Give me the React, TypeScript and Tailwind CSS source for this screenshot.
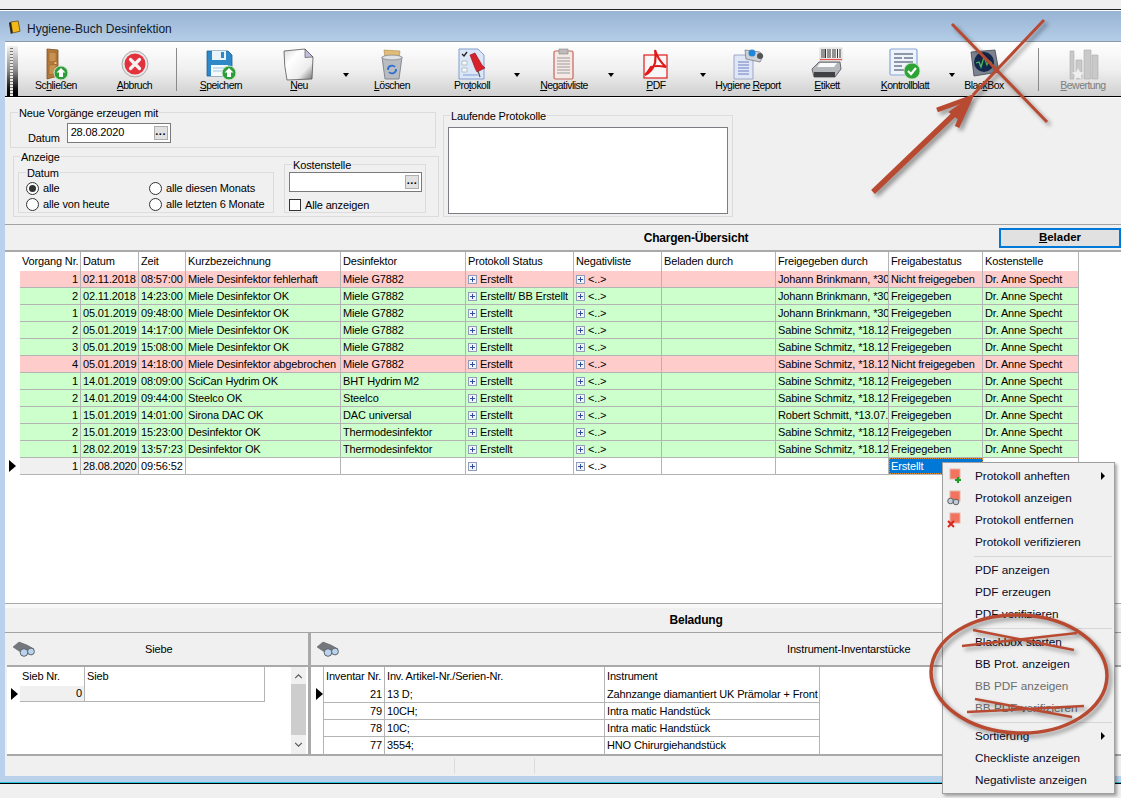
import type { ReactNode } from 'react'

const SANS = 'font-["Liberation_Sans",Arial,sans-serif]'

function UpBadge({ x, y }: { x: number; y: number }) {
  return (
    <g>
      <circle cx={x} cy={y} r="7" fill="#2f9e3a" stroke="#cfe8d0" strokeWidth="1" />
      <path d={`M${x} ${y - 5}l4.5 4.5h-2.5v4.5h-4v-4.5h-2.5z`} fill="#fff" />
    </g>
  )
}

function DoorIcon() {
  return (
    <svg viewBox="0 0 36 34" className="h-[34px] w-9">
      <path d="M9 2l11 1v26l-11 3z" fill="#b27a3c" stroke="#7b4d20" strokeWidth=".8" />
      <path d="M11 5l7 .5v9l-7 .5zM11 18l7-.5v9l-7 1.500z" fill="#c8914f" stroke="#8d5c2a" strokeWidth=".5" />
      <circle cx="17.500" cy="16" r="1" fill="#f4d77b" />
      <UpBadge x={23} y={26} />
    </svg>
  )
}

function CancelIcon() {
  return (
    <svg viewBox="0 0 36 34" className="h-[34px] w-9">
      <circle cx="18" cy="17" r="13" fill="#e8e8e8" stroke="#a9a9a9" strokeWidth="1" />
      <circle cx="18" cy="17" r="10.500" fill="#e2333d" />
      <path d="M13.500 12.500l9 9M22.500 12.500l-9 9" stroke="#f7f3f3" strokeWidth="3.200" strokeLinecap="round" />
    </svg>
  )
}

function FloppyIcon() {
  return (
    <svg viewBox="0 0 36 34" className="h-[34px] w-9">
      <path d="M4 4h21l4 4v21H4z" fill="#2f88c8" stroke="#1f6192" strokeWidth=".8" />
      <rect x="9" y="4" width="14" height="9" fill="#e9f3fa" />
      <rect x="18" y="5" width="3" height="6" fill="#2f88c8" />
      <rect x="8" y="18" width="17" height="11" fill="#f5fafd" />
      <path d="M10 21h12M10 24h12" stroke="#9fc5de" strokeWidth="1" />
      <UpBadge x={26} y={26} />
    </svg>
  )
}

function PageIcon() {
  return (
    <svg viewBox="0 0 36 34" className="h-[34px] w-9">
      <defs>
        <linearGradient id="pg" x1="0" y1="0" x2="1" y2="1">
          <stop offset="0" stopColor="#d9d9d9" />
          <stop offset=".3" stopColor="#ffffff" />
          <stop offset=".7" stopColor="#ededed" />
          <stop offset="1" stopColor="#6f6f6f" />
        </linearGradient>
      </defs>
      <path d="M3 4l21-2 8 8-1 22-25 1q-3-14-3-29z" fill="url(#pg)" stroke="#555" strokeWidth=".8" />
      <path d="M24 2l8 8-8 .5z" fill="#c3bde0" stroke="#444" strokeWidth=".6" />
    </svg>
  )
}

function TrashIcon() {
  return (
    <svg viewBox="0 0 36 34" className="h-[34px] w-9">
      <path d="M10 3l16 1-1 8H11z" fill="#e1bc79" stroke="#a9884f" strokeWidth=".6" />
      <path d="M8 10h20l-3 22H11z" fill="#b9bdc2" stroke="#70757b" strokeWidth=".8" />
      <ellipse cx="18" cy="10.500" rx="10" ry="2.400" fill="#dfe2e5" stroke="#7c8187" strokeWidth=".7" />
      <path d="M14 23a4 4 0 0 1 7-3M22 22a4 4 0 0 1-7 3" fill="none" stroke="#2e6fd1" strokeWidth="1.800" />
    </svg>
  )
}

function ProtocolIcon() {
  return (
    <svg viewBox="0 0 36 34" className="h-[34px] w-9">
      <path d="M5 2h19l6 6v24H5z" fill="#dbe6f7" stroke="#7f9fd0" strokeWidth="1" />
      <path d="M8 7l2 2 3-4" fill="none" stroke="#222" strokeWidth="1.300" />
      <path d="M8 14h5v4H8zM8 21h5v4H8z" fill="#f4f7fb" stroke="#9aa" strokeWidth=".6" />
      <path d="M9 28h15" stroke="#7f9fd0" strokeWidth="1" />
      <path d="M16 8l5-2 7 12 3 3-8 4-2-4z" fill="#d7222c" stroke="#8d1018" strokeWidth=".6" />
      <path d="M24 24l2 6" stroke="#555" strokeWidth="1.200" />
    </svg>
  )
}

function ClipboardIcon() {
  return (
    <svg viewBox="0 0 36 34" className="h-[34px] w-9">
      <rect x="8" y="4" width="19" height="28" rx="1.500" fill="#f5e9e6" stroke="#c4665c" strokeWidth="1.200" />
      <rect x="13" y="2" width="9" height="5" fill="#bbb" stroke="#888" strokeWidth=".6" />
      <path d="M11 11h13M11 14h13M11 17h13M11 20h13M11 23h13M11 26h13" stroke="#999" strokeWidth="1" />
    </svg>
  )
}

function PdfIcon() {
  return (
    <svg viewBox="0 0 36 34" className="h-[34px] w-9">
      <rect x="6" y="8" width="23" height="23" fill="#f7f7f7" stroke="#e01a1a" strokeWidth="1.200" />
      <path d="M7 28q7-3 10-12 1-8 0-13 3 10 11 17-9-2-15 0-3 5-6 8z" fill="none" stroke="#e01a1a" strokeWidth="2.200" />
    </svg>
  )
}

function ReportIcon() {
  return (
    <svg viewBox="0 0 36 34" className="h-[34px] w-9">
      <path d="M4 8h19v24H4z" fill="#dfe7f7" stroke="#8a97ba" strokeWidth=".8" />
      <path d="M8 15h11M8 18h11M8 21h11M8 24h11M8 27h11" stroke="#6f7fc0" strokeWidth="1" />
      <path d="M15 3l15 2 3 4-3 6-14-3z" fill="#cfd1d6" stroke="#6c6f75" strokeWidth=".7" />
      <circle cx="22" cy="6" r="3.500" fill="#1f86d8" />
      <circle cx="30" cy="9" r="3" fill="#555" />
    </svg>
  )
}

function PrinterIcon() {
  return (
    <svg viewBox="0 0 36 34" className="h-[34px] w-9">
      <rect x="11" y="1" width="22" height="13" fill="#f4f4f4" stroke="#bbb" strokeWidth=".5" />
      <path d="M13 2v9M15 2v9M16.500 2v9M19 2v9M21 2v9M24 2v9M26 2v9M28.500 2v9M31 2v9" stroke="#333" strokeWidth="1" />
      <path d="M11 12.500h22" stroke="#e6534f" strokeWidth="1.200" />
      <path d="M3 22l7-7h21l1 7-6 8H5z" fill="#b4b7bb" stroke="#4a4d51" strokeWidth=".8" />
      <path d="M5 25h21v5H5z" fill="#3f4145" />
      <path d="M11 16h17l-3 4H8z" fill="#fafafa" />
    </svg>
  )
}

function CheckSheetIcon() {
  return (
    <svg viewBox="0 0 36 34" className="h-[34px] w-9">
      <rect x="3" y="2" width="27" height="26" rx="1.500" fill="#eef3fb" stroke="#87a7d8" strokeWidth="1.200" />
      <path d="M7 7h19M7 11h8M17 11h9M7 15h19M7 19h8M7 23h11" stroke="#8c98a8" strokeWidth="2" />
      <circle cx="25" cy="24" r="8" fill="#2ea335" stroke="#c9e6ca" strokeWidth=".8" />
      <path d="M21 24l3 3 5-6" fill="none" stroke="#fff" strokeWidth="2.200" />
    </svg>
  )
}

function BlackBoxIcon() {
  return (
    <svg viewBox="0 0 36 34" className="h-[34px] w-9">
      <path d="M5 5l24-2 4 22-25 4z" fill="#7c8290" stroke="#44484f" strokeWidth=".8" />
      <circle cx="18" cy="15" r="10" fill="#14274d" />
      <path d="M10 16l3-1 2 5 3-10 3 8 2-4 3 2" fill="none" stroke="#4fc25b" strokeWidth="1.300" />
    </svg>
  )
}

function BarsIcon() {
  return (
    <svg viewBox="0 0 36 34" className="h-[34px] w-9">
      <path d="M5 4h4v28H5zM11 13h6v19h-6zM19 3h7v29h-7zM27 8h6v24h-6z" fill="#c9c9c9" stroke="#ababab" strokeWidth=".6" />
      <path d="M13 21l2 4 4 .5-3 3 .7 4-3.700-2-3.700 2 .7-4-3-3 4-.5z" fill="#eeeeee" />
    </svg>
  )
}

function Binoculars() {
  return (
    <svg viewBox="0 0 24 16" className="h-4 w-6">
      <path d="M1 6l6-5 8 3 7 4-3 2-5-1-3 3-4-2z" fill="#74787e" stroke="#55585c" strokeWidth=".5" />
      <circle cx="12" cy="11.500" r="3.800" fill="#b9d3ee" stroke="#5f6368" strokeWidth="1" />
      <circle cx="19" cy="10.500" r="3.400" fill="#b9d3ee" stroke="#5f6368" strokeWidth="1" />
    </svg>
  )
}

function Plus() {
  return (
    <span className="mr-[3px] inline-flex h-[9px] w-[9px] flex-none items-center justify-center border border-[#8f9db8] bg-[#f4f4f8]">
      <svg viewBox="0 0 7 7" className="h-[7px] w-[7px]">
        <path d="M3.500 1v5M1 3.500h5" stroke="#2f4f9a" strokeWidth="1" />
      </svg>
    </span>
  )
}

function Arrow() {
  return (
    <svg viewBox="0 0 7 12" className="h-3 w-[7px]">
      <path d="M0 0l7 6-7 6z" fill="#000" />
    </svg>
  )
}

type ToolItem = { before: string; key_: string; after: string; cls: string; icon: ReactNode; off?: boolean }

function ToolButton({ before, key_, after, cls, icon, off }: ToolItem) {
  return (
    <div className={`flex flex-none flex-col items-center pt-[5px] ${cls}`}>
      <div className="h-[32px]">{icon}</div>
      <div className={`whitespace-nowrap text-[10.5px] leading-[12px] tracking-[-0.55px] ${off ? 'text-[#7c7c7c]' : 'text-black'}`}>
        {before}
        <u>{key_}</u>
        {after}
      </div>
    </div>
  )
}

function Drop({ cls }: { cls: string }) {
  return (
    <div className={`flex w-[6px] flex-none pt-[31px] ${cls}`}>
      <div className="h-0 w-0 border-x-[3.500px] border-t-[4px] border-x-transparent border-t-black" />
    </div>
  )
}

function Divider({ cls }: { cls: string }) {
  return <div className={`my-[6px] w-px flex-none bg-[#8a8a8a] ${cls}`} />
}

function Toolbar() {
  return (
    <div className="flex h-[57px] overflow-hidden border-t border-b border-[#8e99a6] border-b-white bg-gradient-to-b from-white via-[#f0f0f0] to-[#cfcfcf] shadow-[inset_0_-1px_0_#000]">
      <div className="ml-[2px] mt-[4px] h-[50px] w-[11px] flex-none bg-gradient-to-b from-[#f4f4f4] via-[#888] to-black pl-[3px]">
        <div className="h-full w-[3px] bg-[repeating-linear-gradient(0deg,#e8e8e8_0,#e8e8e8_2px,#777_2px,#777_3px)]" />
      </div>
      <div className="ml-px flex flex-none">
        <ToolButton before="Sc" key_="h" after="ließen" cls="w-[74px]" icon={<DoorIcon />} />
        <ToolButton before="" key_="A" after="bbruch" cls="w-[83px]" icon={<CancelIcon />} />
        <Divider cls="" />
        <ToolButton before="" key_="S" after="peichern" cls="w-[88px]" icon={<FloppyIcon />} />
        <ToolButton before="" key_="N" after="eu" cls="w-[68px]" icon={<PageIcon />} />
        <Drop cls="ml-[10px]" />
        <ToolButton before="" key_="L" after="öschen" cls="w-[86px]" icon={<TrashIcon />} />
        <ToolButton before="Pro" key_="t" after="okoll" cls="w-[74px]" icon={<ProtocolIcon />} />
        <Drop cls="ml-[5px]" />
        <ToolButton before="" key_="N" after="egativliste" cls="w-[88px]" icon={<ClipboardIcon />} />
        <Drop cls="" />
        <ToolButton before="" key_="P" after="DF" cls="w-[84px]" icon={<PdfIcon />} />
        <Drop cls="ml-[2px]" />
        <ToolButton before="Hygiene " key_="R" after="eport" cls="w-[84px]" icon={<ReportIcon />} />
        <ToolButton before="" key_="E" after="tikett" cls="w-[74px]" icon={<PrinterIcon />} />
        <ToolButton before="" key_="K" after="ontrollblatt" cls="ml-[6px] w-[70px]" icon={<CheckSheetIcon />} />
        <Drop cls="ml-[9px]" />
        <ToolButton before="Blac" key_="k" after="Box" cls="w-[58px]" icon={<BlackBoxIcon />} />
        <Divider cls="ml-[25px]" />
        <ToolButton before="" key_="B" after="ewertung" cls="w-[88px]" off icon={<BarsIcon />} />
      </div>
    </div>
  )
}

function Legend({ text, cls }: { text: string; cls: string }) {
  return <span className={`absolute top-[-6px] bg-[#f0f0f0] px-px text-[11px] leading-[12px] tracking-[-0.15px] ${cls}`}>{text}</span>
}

function DotsInput({ value, cls }: { value: string; cls: string }) {
  return (
    <div className={`flex h-[20px] items-center justify-between border border-[#7a7a7a] bg-white pl-[3px] pr-[2px] text-[11px] tracking-[-0.15px] ${cls}`}>
      <span className="mt-[-2px]">{value}</span>
      <span className="flex h-[14px] w-[14px] items-center justify-center border border-[#adadad] bg-[#e1e1e1] text-[11px] font-bold leading-[8px] tracking-[0.5px]">
        <span className="mt-[-5px]">...</span>
      </span>
    </div>
  )
}

function Radio({ label, on }: { label: string; on?: boolean }) {
  return (
    <div className="flex h-[15px] items-center text-[11px] tracking-[-0.15px]">
      <span className="mr-[4px] flex h-[13px] w-[13px] items-center justify-center rounded-full border border-[#333] bg-white">
        {on && <span className="h-[7px] w-[7px] rounded-full bg-[#333]" />}
      </span>
      {label}
    </div>
  )
}

function FormPanel() {
  return (
    <div className="flex h-[126px] bg-[#f0f0f0]">
      <div className="ml-[5px] w-[429px] flex-none">
        <div className="relative mt-[14px] flex h-[36px] w-[426px] border border-[#dcdcdc] pl-[17px] pt-[10px]">
          <Legend text="Neue Vorgänge erzeugen mit" cls="left-[7px]" />
          <span className="mr-[7px] mt-[8px] text-[11px] leading-[14px] tracking-[-0.15px]">Datum</span>
          <DotsInput value="28.08.2020" cls="w-[104px]" />
        </div>
        <div className="relative ml-[3px] mt-[8px] flex h-[61px] w-[426px] items-end border border-[#dcdcdc] pb-[3px] pl-[4px]">
          <Legend text="Anzeige" cls="left-[6px]" />
          <div className="relative grid h-[41px] w-[256px] grid-cols-[123px_1fr] border border-[#dcdcdc] pl-[7px] pt-[8px]">
            <Legend text="Datum" cls="left-[7px]" />
            <Radio label="alle" on />
            <Radio label="alle diesen Monats" />
            <Radio label="alle von heute" />
            <Radio label="alle letzten 6 Monate" />
          </div>
          <div className="relative ml-[10px] h-[49px] w-[142px] border border-[#dcdcdc] pl-[4px] pt-[7px]">
            <Legend text="Kostenstelle" cls="left-[7px]" />
            <DotsInput value="" cls="w-[133px]" />
            <div className="mt-[7px] flex items-center text-[11px] leading-[12px] tracking-[-0.15px]">
              <span className="mr-[4px] h-[12px] w-[12px] border border-[#333] bg-white" />
              Alle anzeigen
            </div>
          </div>
        </div>
      </div>
      <div className="relative ml-[4px] mt-[17px] h-[102px] w-[290px] flex-none border border-[#dcdcdc] pl-[4px] pt-[11px]">
        <Legend text="Laufende Protokolle" cls="left-[6px]" />
        <div className="h-[87px] w-[280px] border border-[#7d7d85] bg-white" />
      </div>
    </div>
  )
}

const COLS = 'grid-cols-[61px_58px_47px_155px_125px_108px_88px_114px_113px_94px_96px]'
const HEAD = ['Vorgang Nr.', 'Datum', 'Zeit', 'Kurzbezeichnung', 'Desinfektor', 'Protokoll Status', 'Negativliste', 'Beladen durch', 'Freigegeben durch', 'Freigabestatus', 'Kostenstelle']

type Row = [number, string, string, string, string, string, string, string, boolean?]

const ROWS: Row[] = [
  [1, '02.11.2018', '08:57:00', 'Miele Desinfektor fehlerhaft', 'Miele G7882', 'Erstellt', 'Johann Brinkmann, *30', 'Nicht freigegeben', true],
  [2, '02.11.2018', '14:23:00', 'Miele Desinfektor OK', 'Miele G7882', 'Erstellt/ BB Erstellt', 'Johann Brinkmann, *30', 'Freigegeben'],
  [1, '05.01.2019', '09:48:00', 'Miele Desinfektor OK', 'Miele G7882', 'Erstellt', 'Johann Brinkmann, *30', 'Freigegeben'],
  [2, '05.01.2019', '14:17:00', 'Miele Desinfektor OK', 'Miele G7882', 'Erstellt', 'Sabine Schmitz, *18.12', 'Freigegeben'],
  [3, '05.01.2019', '15:08:00', 'Miele Desinfektor OK', 'Miele G7882', 'Erstellt', 'Sabine Schmitz, *18.12', 'Freigegeben'],
  [4, '05.01.2019', '14:18:00', 'Miele Desinfektor abgebrochen', 'Miele G7882', 'Erstellt', 'Sabine Schmitz, *18.12', 'Nicht freigegeben', true],
  [1, '14.01.2019', '08:09:00', 'SciCan Hydrim OK', 'BHT Hydrim M2', 'Erstellt', 'Sabine Schmitz, *18.12', 'Freigegeben'],
  [2, '14.01.2019', '09:44:00', 'Steelco OK', 'Steelco', 'Erstellt', 'Sabine Schmitz, *18.12', 'Freigegeben'],
  [1, '15.01.2019', '14:01:00', 'Sirona DAC OK', 'DAC universal', 'Erstellt', 'Robert Schmitt, *13.07.', 'Freigegeben'],
  [2, '15.01.2019', '15:23:00', 'Desinfektor OK', 'Thermodesinfektor', 'Erstellt', 'Sabine Schmitz, *18.12', 'Freigegeben'],
  [1, '28.02.2019', '13:57:23', 'Desinfektor OK', 'Thermodesinfektor', 'Erstellt', 'Sabine Schmitz, *18.12', 'Freigegeben'],
]

const CELL = 'flex items-center overflow-hidden whitespace-nowrap border-r border-[#b4b4b4] pl-[2px]'

function ChargenGrid() {
  return (
    <div className="h-[353px] border-t-2 border-[#a9a9a9] bg-white text-[11px] tracking-[-0.15px]">
      <div className={`ml-[15px] grid h-[19px] w-fit ${COLS}`}>
        {HEAD.map((h) => (
          <div key={h} className={CELL}>
            {h}
          </div>
        ))}
      </div>
      {ROWS.map((r, i) => (
        <div key={i} className={`ml-[15px] grid h-[17px] w-fit ${COLS} border-b border-[#b4b4b4] ${r[8] ? 'bg-[#ffcccc]' : 'bg-[#ccffcc]'}`}>
          <div className={`${CELL} justify-end pr-[2px]`}>{r[0]}</div>
          <div className={CELL}>{r[1]}</div>
          <div className={CELL}>{r[2]}</div>
          <div className={CELL}>{r[3]}</div>
          <div className={CELL}>{r[4]}</div>
          <div className={CELL}>
            <Plus />
            {r[5]}
          </div>
          <div className={CELL}>
            <Plus />
            {'<..>'}
          </div>
          <div className={CELL} />
          <div className={CELL}>{r[6]}</div>
          <div className={CELL}>{r[7]}</div>
          <div className={CELL}>Dr. Anne Specht</div>
        </div>
      ))}
      <div className="relative ml-[15px] w-fit">
        <span className="absolute left-[-11px] top-[2px]">
          <Arrow />
        </span>
        <div className={`grid h-[17px] ${COLS} border-b border-[#b4b4b4] bg-white`}>
          <div className={`${CELL} justify-end bg-[#f0f0f0] pr-[2px]`}>1</div>
          <div className={`${CELL} bg-[#f0f0f0]`}>28.08.2020</div>
          <div className={CELL}>09:56:52</div>
          <div className={CELL} />
          <div className={CELL} />
          <div className={CELL}>
            <Plus />
          </div>
          <div className={CELL}>
            <Plus />
            {'<..>'}
          </div>
          <div className={CELL} />
          <div className={CELL} />
          <div className="flex items-center overflow-hidden border border-dotted border-[#e08a2e] bg-[#0078d7] pl-[1px] text-white">Erstellt</div>
          <div className={CELL}>Dr. Anne Specht</div>
        </div>
      </div>
    </div>
  )
}

function BottomPanels() {
  return (
    <div className="flex h-[123px] bg-[#f0f0f0] pl-[2px] text-[11px] tracking-[-0.15px]">
      <div className="w-[301px] flex-none">
        <div className="flex h-[34px] items-center border-b-2 border-[#a9a9a9] pl-[5px]">
          <Binoculars />
          <span className="ml-[109px]">Siebe</span>
        </div>
        <div className="flex h-[89px] border-b-2 border-[#a9a9a9] bg-white">
          <div className="w-[284px] flex-none pl-[13px]">
            <div className="grid w-[245px] grid-cols-[65px_180px]">
              <div className="flex h-[19px] items-center border-r border-[#b4b4b4] pl-[2px]">Sieb Nr.</div>
              <div className="flex h-[19px] items-center border-r border-[#b4b4b4] pl-[2px]">Sieb</div>
              <div className="relative flex h-[16px] items-center justify-end border-b border-r border-[#b4b4b4] bg-[#f0f0f0] pr-[2px]">
                <span className="absolute left-[-9px] top-[2px]">
                  <Arrow />
                </span>
                0
              </div>
              <div className="h-[16px] border-b border-r border-[#b4b4b4]" />
            </div>
          </div>
          <div className="flex w-[15px] flex-none flex-col items-center bg-[#f0f0f0]">
            <svg viewBox="0 0 10 6" className="mt-[7px] h-[5px] w-[9px]">
              <path d="M1 5l4-4 4 4" fill="none" stroke="#555" strokeWidth="1.300" />
            </svg>
            <div className="mt-[5px] h-[51px] w-[15px] bg-[#cdcdcd]" />
            <svg viewBox="0 0 10 6" className="mt-[7px] h-[5px] w-[9px]">
              <path d="M1 1l4 4 4-4" fill="none" stroke="#555" strokeWidth="1.300" />
            </svg>
          </div>
        </div>
      </div>
      <div className="w-[3px] flex-none bg-[#a9a9a9]" />
      <div className="min-w-0 flex-1">
        <div className="flex h-[34px] items-center border-b-2 border-[#a9a9a9] pl-[5px]">
          <Binoculars />
          <span className="ml-[447px] whitespace-nowrap">Instrument-Inventarstücke</span>
        </div>
        <div className="relative h-[89px] border-b-2 border-[#a9a9a9] bg-white pl-[12px]">
          <span className="absolute left-[5px] top-[21px]">
            <Arrow />
          </span>
          <div className="grid w-[496px] grid-cols-[61px_220px_215px] border-l border-[#b4b4b4]">
            {['Inventar Nr.', 'Inv. Artikel-Nr./Serien-Nr.', 'Instrument'].map((h) => (
              <div key={h} className="flex h-[19px] items-center border-r border-[#b4b4b4] pl-[2px]">
                {h}
              </div>
            ))}
            {[
              ['21', '13 D;', 'Zahnzange diamantiert UK Prämolar + Front'],
              ['79', '10CH;', 'Intra matic Handstück'],
              ['78', '10C;', 'Intra matic Handstück'],
              ['77', '3554;', 'HNO Chirurgiehandstück'],
            ].map((r, i) => (
              <div key={r[0]} className={`col-span-3 grid h-[17px] grid-cols-[61px_220px_215px] ${i < 3 ? 'border-b border-[#b4b4b4]' : ''}`}>
                <div className="flex items-center justify-end border-r border-[#b4b4b4] pr-[2px]">{r[0]}</div>
                <div className="flex items-center border-r border-[#b4b4b4] pl-[2px]">{r[1]}</div>
                <div className="flex items-center whitespace-nowrap border-r border-[#b4b4b4] pl-[2px]">{r[2]}</div>
              </div>
            ))}
          </div>
        </div>
      </div>
    </div>
  )
}

type MenuEntry = { label?: string; icon?: ReactNode; sub?: boolean; off?: boolean; sep?: boolean }

function PinSquare({ badge }: { badge: 'plus' | 'glass' | 'x' }) {
  return (
    <svg viewBox="0 0 16 16" className="h-4 w-4">
      <rect x="3" y="1" width="10" height="10" fill="#f2735e" stroke="#e6b3a8" strokeWidth="1" />
      {badge === 'plus' && <path d="M11 9v6M8 12h6" stroke="#1c9c28" strokeWidth="2.200" />}
      {badge === 'glass' && (
        <g fill="#c3cdd8" stroke="#5f6368" strokeWidth="1">
          <circle cx="3.500" cy="11" r="2.800" />
          <circle cx="9" cy="12" r="2.800" />
        </g>
      )}
      {badge === 'x' && <path d="M1 9l6 6M7 9l-6 6" stroke="#d8261c" strokeWidth="2" />}
    </svg>
  )
}

const MENU: MenuEntry[] = [
  { label: 'Protokoll anheften', icon: <PinSquare badge="plus" />, sub: true },
  { label: 'Protokoll anzeigen', icon: <PinSquare badge="glass" /> },
  { label: 'Protokoll entfernen', icon: <PinSquare badge="x" /> },
  { label: 'Protokoll verifizieren' },
  { sep: true },
  { label: 'PDF anzeigen' },
  { label: 'PDF erzeugen' },
  { label: 'PDF verifizieren' },
  { sep: true },
  { label: 'Blackbox starten' },
  { label: 'BB Prot. anzeigen' },
  { label: 'BB PDF anzeigen', off: true },
  { label: 'BB PDF verifizieren', off: true },
  { sep: true },
  { label: 'Sortierung', sub: true },
  { label: 'Checkliste anzeigen' },
  { label: 'Negativliste anzeigen' },
]

function ContextMenu() {
  return (
    <div className="absolute left-[942px] top-[462px] w-[173px] border border-[#a0a0a0] bg-[#f0f0f0] py-[2px] shadow-[2px_2px_3px_rgba(0,0,0,0.35)]">
      {MENU.map((m, i) =>
        m.sep ? (
          <div key={i} className="ml-[31px] mr-[2px] flex h-[6px] items-center">
            <div className="h-px w-full bg-[#d7d7d7]" />
          </div>
        ) : (
          <div key={i} className={`relative flex h-[22px] items-center pl-[32px] text-[11.75px] ${m.off ? 'text-[#6d6d6d]' : 'text-[#0a0a1e]'}`}>
            {m.icon && <span className="absolute left-[4px] top-[3px]">{m.icon}</span>}
            {m.label}
            {m.sub && (
              <span className="absolute right-[9px] top-[7px] h-0 w-0 border-y-[4px] border-l-[4px] border-y-transparent border-l-black" />
            )}
          </div>
        ),
      )}
    </div>
  )
}

function Annotations() {
  return (
    <svg viewBox="0 0 1121 798" className="pointer-events-none absolute left-0 top-0 h-[798px] w-[1121px] drop-shadow-[3px_3px_2px_rgba(0,0,0,0.4)]">
      <g stroke="#b84a32" fill="none" strokeLinecap="butt">
        <path d="M952 24L1047 122M1044 20L973 95" strokeWidth="3" />
        <path d="M873 192L968 101" strokeWidth="5.500" />
        <path d="M937 110L970 98L957 127" strokeWidth="5" />
        <path d="M950 112L970 98L958 118Z" fill="#b84a32" strokeWidth="2" />
        <ellipse cx="1019" cy="674" rx="88" ry="59" transform="rotate(2 1019 674)" strokeWidth="3.500" />
        <path d="M973 630L1074 650M962 646L1077 633M975 699L1072 717M967 712L1084 706" strokeWidth="2.500" />
      </g>
    </svg>
  )
}

export default function App() {
  return (
    <div className={`relative h-[798px] w-[1121px] overflow-hidden bg-[#f0f0f0] text-black ${SANS}`}>
      <div className="h-[9px]" />
      <div className="h-[2px] border-t border-[#222] bg-white" />
      <div className="flex h-[771px] flex-col bg-[#b9d1ea]">
        <div className="flex h-[30px] flex-none items-center bg-gradient-to-b from-[#98b4d3] to-[#b4cde8] pl-[8px]">
          <svg viewBox="0 0 14 16" className="mt-[3px] h-[15px] w-[13px]">
            <path d="M3 2l8-1 2 11-8 2z" fill="#f2b91c" stroke="#5a4310" strokeWidth=".8" />
            <path d="M1 3l2-1 2 12-2 1z" fill="#2b2413" />
          </svg>
          <span className="ml-[6px] mt-[5px] text-[12px] text-[#101828]">Hygiene-Buch Desinfektion</span>
        </div>
        <div className="flex min-h-0 flex-col pl-[5px]">
          <Toolbar />
          <FormPanel />
          <div className="flex h-[26px] items-center border-t border-[#a3a3a3] bg-[#f0f0f0]">
            <div className="flex-1 pl-[388px] text-center text-[12px] font-bold tracking-[-0.2px]">Chargen-Übersicht</div>
            <div className="flex h-[20px] w-[122px] flex-none items-center justify-center border-2 border-[#0078d7] bg-[#e1e1e1] text-[11.5px] font-bold">
              <span>
                <u>B</u>elader
              </span>
            </div>
          </div>
          <ChargenGrid />
          <div className="h-[5px] flex-none border-t border-[#a9a9a9] bg-[#f8f8f8]" />
          <div className="flex h-[25px] flex-none items-center justify-center border-b border-[#a3a3a3] bg-[#f0f0f0] pl-[266px] text-[12px] font-bold tracking-[-0.2px]">
            Beladung
          </div>
          <BottomPanels />
          <div className="flex h-[20px] items-stretch bg-[#f0f0f0] py-[2px] pl-[449px]">
            <div className="w-[81px] border-x border-[#dcdcdc]" />
          </div>
        </div>
      </div>
      <div className="h-[2px] border-t border-[#2bc4e0] bg-black" />
      <ContextMenu />
      <Annotations />
    </div>
  )
}
